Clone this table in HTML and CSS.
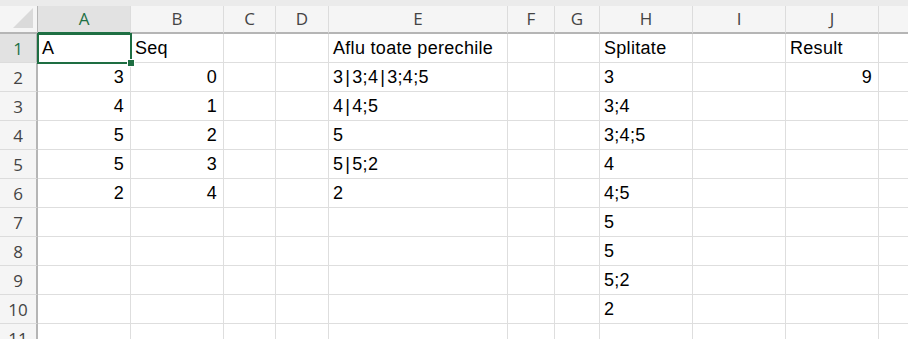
FILE: index.html
```html
<!DOCTYPE html>
<html lang="ro">
<head>
<meta charset="utf-8">
<title>Foaie</title>
<link rel="stylesheet" href="styles.css">
</head>
<body>
<div class="topstrip"></div>
<div class="sheet">
  <!-- column headers -->
  <div class="corner"><span class="tri"></span></div>
  <div class="ch sel">A</div>
  <div class="ch">B</div>
  <div class="ch">C</div>
  <div class="ch">D</div>
  <div class="ch">E</div>
  <div class="ch">F</div>
  <div class="ch">G</div>
  <div class="ch">H</div>
  <div class="ch">I</div>
  <div class="ch">J</div>
  <div class="ch last"></div>

  <!-- row 1 -->
  <div class="rh sel">1</div>
  <div class="c active">A<span class="handle"></span></div>
  <div class="c">Seq</div>
  <div class="c"></div><div class="c"></div>
  <div class="c">Aflu toate perechile</div>
  <div class="c"></div><div class="c"></div>
  <div class="c">Splitate</div>
  <div class="c"></div>
  <div class="c">Result</div>
  <div class="c last"></div>

  <!-- row 2 -->
  <div class="rh">2</div>
  <div class="c n">3</div><div class="c n">0</div>
  <div class="c"></div><div class="c"></div>
  <div class="c">3<span class="bar">|</span>3;4<span class="bar">|</span>3;4;5</div>
  <div class="c"></div><div class="c"></div>
  <div class="c">3</div>
  <div class="c"></div>
  <div class="c n">9</div>
  <div class="c last"></div>

  <!-- row 3 -->
  <div class="rh">3</div>
  <div class="c n">4</div><div class="c n">1</div>
  <div class="c"></div><div class="c"></div>
  <div class="c">4<span class="bar">|</span>4;5</div>
  <div class="c"></div><div class="c"></div>
  <div class="c">3;4</div>
  <div class="c"></div><div class="c"></div>
  <div class="c last"></div>

  <!-- row 4 -->
  <div class="rh">4</div>
  <div class="c n">5</div><div class="c n">2</div>
  <div class="c"></div><div class="c"></div>
  <div class="c">5</div>
  <div class="c"></div><div class="c"></div>
  <div class="c">3;4;5</div>
  <div class="c"></div><div class="c"></div>
  <div class="c last"></div>

  <!-- row 5 -->
  <div class="rh">5</div>
  <div class="c n">5</div><div class="c n">3</div>
  <div class="c"></div><div class="c"></div>
  <div class="c">5<span class="bar">|</span>5;2</div>
  <div class="c"></div><div class="c"></div>
  <div class="c">4</div>
  <div class="c"></div><div class="c"></div>
  <div class="c last"></div>

  <!-- row 6 -->
  <div class="rh">6</div>
  <div class="c n">2</div><div class="c n">4</div>
  <div class="c"></div><div class="c"></div>
  <div class="c">2</div>
  <div class="c"></div><div class="c"></div>
  <div class="c">4;5</div>
  <div class="c"></div><div class="c"></div>
  <div class="c last"></div>

  <!-- row 7 -->
  <div class="rh">7</div>
  <div class="c"></div><div class="c"></div><div class="c"></div><div class="c"></div>
  <div class="c"></div><div class="c"></div><div class="c"></div>
  <div class="c">5</div>
  <div class="c"></div><div class="c"></div>
  <div class="c last"></div>

  <!-- row 8 -->
  <div class="rh">8</div>
  <div class="c"></div><div class="c"></div><div class="c"></div><div class="c"></div>
  <div class="c"></div><div class="c"></div><div class="c"></div>
  <div class="c">5</div>
  <div class="c"></div><div class="c"></div>
  <div class="c last"></div>

  <!-- row 9 -->
  <div class="rh">9</div>
  <div class="c"></div><div class="c"></div><div class="c"></div><div class="c"></div>
  <div class="c"></div><div class="c"></div><div class="c"></div>
  <div class="c">5;2</div>
  <div class="c"></div><div class="c"></div>
  <div class="c last"></div>

  <!-- row 10 -->
  <div class="rh">10</div>
  <div class="c"></div><div class="c"></div><div class="c"></div><div class="c"></div>
  <div class="c"></div><div class="c"></div><div class="c"></div>
  <div class="c">2</div>
  <div class="c"></div><div class="c"></div>
  <div class="c last"></div>

  <!-- row 11 -->
  <div class="rh">11</div>
  <div class="c"></div><div class="c"></div><div class="c"></div><div class="c"></div>
  <div class="c"></div><div class="c"></div><div class="c"></div>
  <div class="c"></div>
  <div class="c"></div><div class="c"></div>
  <div class="c last"></div>
</div>
</body>
</html>
```
FILE: styles.css
```css
html, body {
  margin: 0;
  padding: 0;
  background: #ffffff;
  overflow: hidden;
}

.topstrip {
  height: 6px;
  background: #ebebeb;
}

.sheet {
  display: grid;
  grid-template-columns: 38px 93px 93px 52px 53px 179px 47px 45px 93px 93px 93px 60px;
  grid-template-rows: 28px repeat(11, 29px);
  font-family: "Liberation Sans", Arial, sans-serif;
  width: 938px;
}

/* header cells */
.corner,
.ch,
.rh {
  background: #f5f5f5;
  color: #444444;
  font-family: "Open Sans", "Liberation Sans", sans-serif;
  font-size: 17px;
  box-sizing: border-box;
}

.corner {
  position: relative;
  border-right: 1px solid #b5b5b5;
  border-bottom: 2px solid #b5b5b5;
}

.corner .tri {
  position: absolute;
  right: 4px;
  bottom: 4px;
  width: 0;
  height: 0;
  border-left: 20px solid transparent;
  border-bottom: 20px solid #dadada;
}

.ch {
  display: flex;
  align-items: center;
  justify-content: center;
  border-right: 1px solid #dcdcdc;
  border-bottom: 2px solid #b5b5b5;
  padding-bottom: 1px;
}

.ch.last {
  border-right: none;
}

.ch.sel {
  background: #e2e2e2;
  color: #1e7145;
  border-bottom-color: #1e7145;
}

.rh {
  display: flex;
  align-items: center;
  justify-content: center;
  border-right: 2px solid #b5b5b5;
  border-bottom: 1px solid #dcdcdc;
  padding-top: 1px;
}

.rh.sel {
  background: #e2e2e2;
  color: #1e7145;
}

/* body cells */
.c {
  position: relative;
  box-sizing: border-box;
  border-right: 1px solid #dedede;
  border-bottom: 1px solid #dedede;
  font-size: 18px;
  letter-spacing: 0.3px;
  color: #000000;
  padding: 0 4px;
  display: flex;
  align-items: center;
  white-space: nowrap;
  padding-top: 1px;
}

.c.n {
  justify-content: flex-end;
  padding-right: 6px;
}

.c.last {
  border-right: none;
}

.bar {
  padding: 0 2px;
}

.c.active {
  outline: 2px solid #1e6e42;
  outline-offset: -1px;
  z-index: 2;
}

.handle {
  position: absolute;
  right: -5px;
  bottom: -5px;
  width: 6px;
  height: 6px;
  background: #1e6e42;
  border: 1px solid #ffffff;
}
```
